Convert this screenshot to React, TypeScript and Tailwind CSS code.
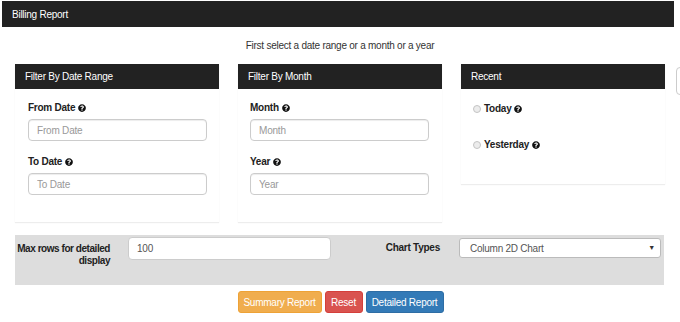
import { FC } from "react";
import { FaQuestionCircle } from "react-icons/fa";

const Help: FC = () => (
  <FaQuestionCircle className="ml-[3px] inline-block text-[8px] text-[#111] align-[-1px]" />
);

const PanelHeader: FC<{ title: string }> = ({ title }) => (
  <div className="flex h-[25px] items-center bg-[#222] pl-[10px] text-white">{title}</div>
);

const Field: FC<{ label: string; placeholder: string; first?: boolean }> = ({
  label,
  placeholder,
  first,
}) => (
  <div className={first ? "" : "mt-[14px]"}>
    <div className="font-bold leading-[13px] text-[#222]">
      {label}
      <Help />
    </div>
    <input
      className="mt-[5px] h-[22px] w-[179px] rounded-[4px] border border-[#ccc] px-[8px] text-[10px] tracking-[-0.2px] shadow-[inset_0_1px_1px_rgba(0,0,0,0.075)] outline-none placeholder:text-[#999]"
      placeholder={placeholder}
    />
  </div>
);

const Radio: FC<{ label: string; className?: string }> = ({ label, className }) => (
  <div className={`flex items-center leading-[13px] ${className ?? ""}`}>
    <span className="h-[8px] w-[8px] rounded-full border border-[#c4c4c4] bg-[#ececec]" />
    <span className="ml-[3px] font-bold text-[#222]">{label}</span>
    <Help />
  </div>
);

export default function App() {
  return (
    <div className="h-[322px] w-[680px] overflow-hidden bg-white font-['Liberation_Sans',Arial,sans-serif] text-[10px] tracking-[-0.25px] text-[#333]">
      <div className="ml-[2px] mt-[1px] flex h-[26px] w-[672px] items-center bg-[#222] pl-[10px] text-white">
        Billing Report
      </div>

      <div className="mt-[12px] text-center leading-[13px]">
        First select a date range or a month or a year
      </div>

      <div className="mt-[12px] flex items-start pl-[15px]">
        <div className="flex items-start gap-[19px]">
          <div className="w-[204px] shadow-[0_1px_1px_rgba(0,0,0,0.07)]">
            <PanelHeader title="Filter By Date Range" />
            <div className="pb-[27px] pl-[13px] pt-[12px]">
              <Field label="From Date" placeholder="From Date" first />
              <Field label="To Date" placeholder="To Date" />
            </div>
          </div>

          <div className="w-[204px] shadow-[0_1px_1px_rgba(0,0,0,0.07)]">
            <PanelHeader title="Filter By Month" />
            <div className="pb-[27px] pl-[12px] pt-[12px]">
              <Field label="Month" placeholder="Month" first />
              <Field label="Year" placeholder="Year" />
            </div>
          </div>

          <div className="w-[204px] shadow-[0_1px_1px_rgba(0,0,0,0.07)]">
            <PanelHeader title="Recent" />
            <div className="pb-[33px] pl-[12px] pt-[13px]">
              <Radio label="Today" />
              <Radio label="Yesterday" className="mt-[23px]" />
            </div>
          </div>
        </div>
        <div className="ml-[11px] mt-[3px] h-[28px] w-[30px] shrink-0 rounded-[4px] border border-[#ccc]" />
      </div>

      <div className="ml-[15px] mt-[13px] flex h-[50px] w-[649px] items-start bg-[#ddd] pt-[2px]">
        <div className="w-[95px] whitespace-nowrap pt-[6px] text-right font-bold leading-[12px] tracking-[-0.45px] text-[#222]">
          Max rows for detailed
          <br />
          display
        </div>
        <input
          className="ml-[18px] h-[23px] w-[203px] rounded-[4px] border border-[#ccc] bg-white px-[8px] text-[10px] tracking-[-0.2px] text-[#555] outline-none"
          defaultValue="100"
        />
        <div className="w-[109px] pt-[5px] text-right font-bold leading-[12px] text-[#222]">
          Chart Types
        </div>
        <div className="ml-[19px] mt-[1px] flex h-[20px] w-[202px] items-center justify-between rounded-[3px] border border-[#bbb] bg-white pl-[10px] pr-[5px] text-[#555]">
          <span>Column 2D Chart</span>
          <span className="text-[7px] text-[#333]">▼</span>
        </div>
      </div>

      <div className="mt-[6px] flex justify-center gap-[3px] pl-[1px]">
        <button className="h-[22px] w-[84px] whitespace-nowrap rounded-[3px] border border-[#eea236] bg-[#f0ad4e] text-white">
          Summary Report
        </button>
        <button className="h-[22px] w-[38px] whitespace-nowrap rounded-[3px] border border-[#d43f3a] bg-[#d9534f] text-white">
          Reset
        </button>
        <button className="h-[22px] w-[78px] whitespace-nowrap rounded-[3px] border border-[#2e6da4] bg-[#337ab7] text-white">
          Detailed Report
        </button>
      </div>
    </div>
  );
}
